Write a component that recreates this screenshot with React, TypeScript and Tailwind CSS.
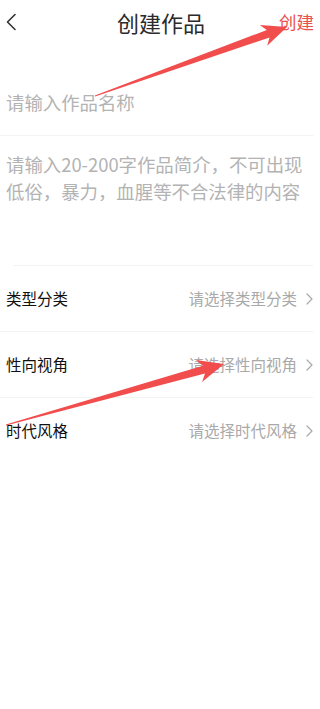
import React from 'react';

type Pt = [number, number];

// tapered annotation arrow: thin tail, widening shaft, notched head
function arrowPoints(tail: Pt, tip: Pt, headLen: number, headHalf: number, shaftHalf: number) {
  const dx = tip[0] - tail[0];
  const dy = tip[1] - tail[1];
  const len = Math.hypot(dx, dy);
  const ux = dx / len;
  const uy = dy / len;
  const nx = -uy;
  const ny = ux;
  const at = (d: number, off: number): Pt => [tail[0] + ux * d + nx * off, tail[1] + uy * d + ny * off];
  const pts: Pt[] = [
    at(0, 0.4),
    at(len - headLen * 0.8, shaftHalf),
    at(len - headLen, headHalf),
    tip,
    at(len - headLen, -headHalf),
    at(len - headLen * 0.8, -shaftHalf),
    at(0, -0.4),
  ];
  return pts.map((p) => `${p[0].toFixed(1)},${p[1].toFixed(1)}`).join(' ');
}

const Chevron = () => (
  <svg width="7" height="12" viewBox="0 0 7 12" fill="none" className="shrink-0">
    <path d="M1 1l5 5-5 5" stroke="#a9a9a9" strokeWidth="1.2" strokeLinecap="round" strokeLinejoin="round" />
  </svg>
);

const rows = [
  { label: '类型分类', value: '请选择类型分类' },
  { label: '性向视角', value: '请选择性向视角' },
  { label: '时代风格', value: '请选择时代风格' },
];

export default function App() {
  return (
    <div
      className="relative w-[320px] h-[709px] bg-white overflow-hidden"
      style={{ fontFamily: '"Noto Sans CJK SC", "Noto Sans", sans-serif' }}
    >
      <header className="flex items-center h-[44px] px-[5px]">
        <svg width="12" height="18" viewBox="0 0 12 18" fill="none" className="shrink-0">
          <path d="M10 1.5L2.5 9l7.5 7.5" stroke="#333" strokeWidth="1.6" strokeLinecap="round" strokeLinejoin="round" />
        </svg>
        <h1 className="flex-1 text-center text-[22px] leading-[44px] text-[#2b2b2b] pl-[26px]">创建作品</h1>
        <button className="text-[17.5px] text-[#e8514e] pr-[1px]">创建</button>
      </header>

      <div className="pt-[45px] pb-[19px] px-[6px] text-[18.4px] leading-[27px] text-[#b3b3b3]">请输入作品名称</div>
      <div className="h-px bg-[#f3f3f3] mr-[7px]" />

      <div className="h-[129px] pt-[15px] px-[6px] text-[18.4px] leading-[27px] text-[#b3b3b3]">
        请输入20-200字作品简介，不可出现低俗，暴力，血腥等不合法律的内容
      </div>
      <div className="h-px bg-[#f3f3f3] ml-[13px] mr-[7px]" />

      {rows.map((r, i) => (
        <div key={r.label}>
          <div className="flex items-center h-[65px] pl-[6px] pr-[7px]">
            <span className="text-[15.5px] text-[#111]">{r.label}</span>
            <span className="ml-auto text-[15.5px] text-[#a9a9a9] mr-[9px]">{r.value}</span>
            <Chevron />
          </div>
          {i < rows.length - 1 && <div className="h-px bg-[#f3f3f3] mr-[7px]" />}
        </div>
      ))}

      <svg className="absolute inset-0 pointer-events-none" width="320" height="709" viewBox="0 0 320 709">
        <polygon points={arrowPoints([95, 96], [287, 27], 25, 11, 4)} fill="#f24d4d" />
        <polygon points={arrowPoints([6, 425], [224, 364], 26, 11.5, 4)} fill="#f24d4d" />
      </svg>
    </div>
  );
}
